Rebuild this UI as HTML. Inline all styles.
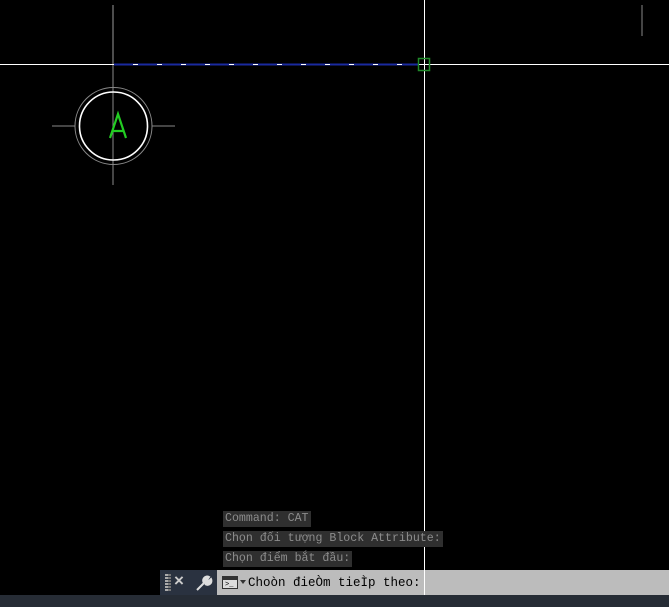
<!DOCTYPE html>
<html><head><meta charset="utf-8"><style>
html,body{margin:0;padding:0;background:#000;width:669px;height:607px;overflow:hidden;position:relative;font-family:"Liberation Mono",monospace}
.h{position:absolute;left:223px;height:16px;line-height:16px;background:#2f2f2f;color:#8c8c8c;font-size:11.6px;padding:0 2px}
</style></head><body>
<svg width="669" height="607" style="position:absolute;left:0;top:0">
<line x1="113" y1="5" x2="113" y2="64" stroke="#9a9a9a" stroke-width="1"/>
<line x1="113" y1="64" x2="113" y2="185" stroke="#8a8a8a" stroke-width="1"/>
<line x1="642" y1="5" x2="642" y2="36" stroke="#888" stroke-width="1"/>
<line x1="0" y1="64.5" x2="669" y2="64.5" stroke="#fff" stroke-width="1"/>
<line x1="114" y1="64.5" x2="418" y2="64.5" stroke="#1a2aa0" stroke-width="2"/>
<line x1="133" y1="64.5" x2="418" y2="64.5" stroke="#fff" stroke-width="1" stroke-dasharray="5,19"/>
<line x1="424.5" y1="0" x2="424.5" y2="595" stroke="#fff" stroke-width="1"/>
<rect x="418.5" y="58.5" width="11" height="12" fill="none" stroke="#1f8a2a" stroke-width="1.5"/>
<line x1="52" y1="126" x2="75" y2="126" stroke="#888"/>
<line x1="152" y1="126" x2="175" y2="126" stroke="#888"/>
<circle cx="113.5" cy="126" r="38.5" fill="none" stroke="#888" stroke-width="1"/>
<circle cx="113.5" cy="126" r="34" fill="none" stroke="#fff" stroke-width="1.6"/>
<path d="M110 138 L118 114 L126 138 M112.5 131 L123.5 131" stroke="#22cc22" stroke-width="2.2" fill="none"/>
</svg>
<div class="h" style="top:511px">Command: CAT</div>
<div class="h" style="top:531px">Chọn đối tượng Block Attribute:</div>
<div class="h" style="top:551px">Chọn điểm bắt đầu:</div>
<div style="position:absolute;left:160px;top:570px;width:57px;height:25px;background:#2a3240"></div>
<div style="position:absolute;left:165px;top:574px;width:3px;height:17px;background:repeating-linear-gradient(#aaa 0 2px,transparent 2px 3px)"></div>
<div style="position:absolute;left:168px;top:574px;width:3px;height:17px;background:repeating-linear-gradient(#777 0 2px,transparent 2px 3px)"></div>
<div style="position:absolute;left:174px;top:571px;color:#ccc;font:bold 17px 'Liberation Sans',sans-serif">×</div>
<svg style="position:absolute;left:195px;top:574px" width="18" height="18"><path d="M2 16 L10 8 M9 9 A4 4 0 0 1 14 3 L12 6 L14 7 L16 5 A4 4 0 0 1 10 10" stroke="#ddd" stroke-width="2" fill="#ddd"/></svg>
<div style="position:absolute;left:217px;top:570px;width:452px;height:25px;background:#bcbcbc"></div>
<div style="position:absolute;left:222px;top:576px;width:14px;height:11px;border:1px solid #333;background:#ddd"><div style="position:absolute;left:0;top:0;width:14px;height:3px;background:#333"></div><div style="position:absolute;left:2px;top:5px;font-size:7px;color:#000;line-height:6px">&gt;_</div></div>
<div style="position:absolute;left:240px;top:580px;width:0;height:0;border-left:3px solid transparent;border-right:3px solid transparent;border-top:4px solid #333"></div>
<div style="position:absolute;left:248px;top:575px;font-size:12.5px;color:#000;line-height:16px">Choòn đieÒm tieÌp theo:</div>
<div style="position:absolute;left:424px;top:570px;width:1px;height:25px;background:#fff"></div>
<div style="position:absolute;left:0;top:595px;width:669px;height:12px;background:#262c35"></div>
</body></html>
